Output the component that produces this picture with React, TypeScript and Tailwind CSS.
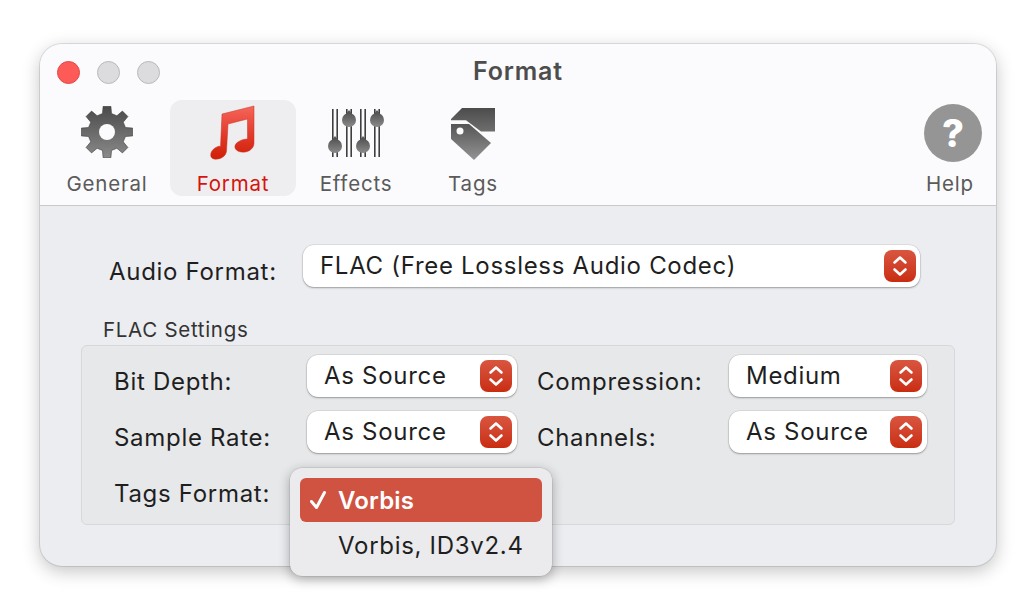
const font = { fontFamily: "Inter, 'Noto Sans', sans-serif" };

// gear outline: 8 teeth round a hole
function gearPath() {
  const pts: string[] = [];
  const teeth = 8;
  for (let i = 0; i < teeth; i++) {
    const a = (i * Math.PI * 2) / teeth - Math.PI / 2;
    const rows: [number, number][] = [
      [-0.24, 19],
      [-0.15, 26],
      [0.15, 26],
      [0.24, 19],
    ];
    for (const [da, r] of rows) {
      pts.push(`${(26 + r * Math.cos(a + da)).toFixed(2)} ${(26 + r * Math.sin(a + da)).toFixed(2)}`);
    }
  }
  return "M" + pts.join("L") + "Z";
}

function GearIcon() {
  return (
    <svg width="52" height="52" viewBox="0 0 52 52">
      <defs>
        <linearGradient id="gearFill" x1="0" y1="0" x2="0" y2="1">
          <stop offset="0" stopColor="#4a4a4a" />
          <stop offset="1" stopColor="#8a8a8a" />
        </linearGradient>
      </defs>
      <path d={gearPath()} fill="url(#gearFill)" stroke="#3e3e3e" strokeWidth="0.6" />
      <circle cx="26" cy="26" r="8" fill="#fbfbfd" />
    </svg>
  );
}

function NoteIcon() {
  return (
    <svg className="mt-[2px]" width="46" height="56" viewBox="0 0 46 56">
      <defs>
        <linearGradient id="noteFill" x1="0" y1="0" x2="0" y2="1">
          <stop offset="0" stopColor="#f5665a" />
          <stop offset="0.55" stopColor="#e2392a" />
          <stop offset="1" stopColor="#cf1f06" />
        </linearGradient>
      </defs>
      <path
        d="M12 9L44 1V38C44 44 38 48 31 47C24 46 23 40 28 37C31 35 34 34 37.500 34L37.500 14L18 19L16.500 46C16 52 9 55 4 54C-1 53 0 46 5 43C8 41 9.500 41 10.500 41.500Z"
        fill="url(#noteFill)"
        stroke="#c9301e"
        strokeWidth="0.5"
      />
    </svg>
  );
}

function SlidersIcon() {
  const sliders = [
    { x: 7, y: 37 },
    { x: 21, y: 11 },
    { x: 35, y: 37 },
    { x: 49, y: 11 },
  ];
  return (
    <svg className="mt-[1px]" width="56" height="48" viewBox="0 0 56 48">
      <defs>
        <linearGradient id="knobFill" x1="0" y1="0" x2="0" y2="1">
          <stop offset="0" stopColor="#555" />
          <stop offset="1" stopColor="#8a8a8a" />
        </linearGradient>
      </defs>
      {sliders.map((s) => (
        <g key={s.x}>
          <rect x={s.x - 3} y="0" width="1.600" height="48" fill="#3f3f3f" />
          <rect x={s.x + 1.400} y="0" width="1.600" height="48" fill="#3f3f3f" />
          <circle cx={s.x} cy={s.y} r="7" fill="url(#knobFill)" />
          <path d={`M${s.x - 3} ${s.y - 6}L${s.x} ${s.y - 10}L${s.x + 3} ${s.y - 6}Z`} fill="#555" />
        </g>
      ))}
    </svg>
  );
}

function TagsIcon() {
  return (
    <svg className="mt-[4px]" width="44" height="52" viewBox="0 0 44 52">
      <defs>
        <linearGradient id="tagBack" x1="0" y1="0" x2="0" y2="1">
          <stop offset="0" stopColor="#4c4c4c" />
          <stop offset="1" stopColor="#6e6e6e" />
        </linearGradient>
        <linearGradient id="tagFront" x1="0" y1="0" x2="0" y2="1">
          <stop offset="0" stopColor="#555" />
          <stop offset="1" stopColor="#949494" />
        </linearGradient>
      </defs>
      <path d="M11 0H44V23.500H30L15 12.300H0V11Z" fill="url(#tagBack)" />
      <path d="M0 16H18L40 35L23 52L0 31Z" fill="url(#tagFront)" />
      <circle cx="9" cy="23" r="3.500" fill="#fbfbfd" />
    </svg>
  );
}

function Stepper() {
  return (
    <div className="flex h-8 w-8 shrink-0 items-center justify-center rounded-lg bg-gradient-to-b from-[#d9553f] to-[#c92c10]">
      <svg width="18" height="24" viewBox="0 0 18 24" fill="none" stroke="#fff" strokeWidth="2.600" strokeLinecap="round" strokeLinejoin="round">
        <path d="M3.500 8.500L9 3.500L14.500 8.500" />
        <path d="M3.500 15.500L9 20.500L14.500 15.500" />
      </svg>
    </div>
  );
}

function Select({ value, width }: { value: string; width: string }) {
  return (
    <div className={`flex h-[42px] ${width} shrink-0 items-center justify-between rounded-[11px] bg-white pl-[17px] pr-[5px] text-[24px] tracking-[0.7px] text-[#1f1f1f] shadow-[0_0_0_0.5px_rgba(0,0,0,0.12),0_1px_2px_rgba(0,0,0,0.3)]`}>
      <span className="-mt-[1px]">{value}</span>
      <Stepper />
    </div>
  );
}

function ToolItem({ label, icon, active, className }: { label: string; icon: React.ReactNode; active?: boolean; className: string }) {
  return (
    <div className={`flex h-24 flex-col items-center rounded-xl ${active ? "bg-[#eeeef0] text-[#d5140c]" : "text-[#5a5a5a]"} ${className}`}>
      <div className="flex h-16 items-center">{icon}</div>
      <div className="mt-2 text-[20.500px] leading-[24px] tracking-[0.8px]">{label}</div>
    </div>
  );
}

function Row({ children }: { children: React.ReactNode }) {
  return <div className="flex h-[42px] items-center">{children}</div>;
}

function Label({ text, width }: { text: string; width: string }) {
  return <div className={`mt-3 ${width} shrink-0 text-[24px] tracking-[0.7px] text-[#1f1f1f]`}>{text}</div>;
}

export default function App() {
  return (
    <div className="h-[610px] w-[1036px] bg-white pl-10 pt-11" style={font}>
      <div className="flex h-[522px] w-[956px] flex-col rounded-[22px] bg-[#ecedf0] shadow-[0_0_0_1px_rgba(0,0,0,0.1),0_5px_18px_rgba(0,0,0,0.24)]">
        <div className="h-[162px] shrink-0 rounded-t-[22px] border-b border-[#c9c9cb] bg-[#fbfbfd]">
          <div className="flex h-14 items-center pl-[17px]">
            <div className="flex w-[299px] gap-[17px]">
              <div className="h-[23px] w-[23px] rounded-full border border-[#e04945] bg-[#fd5a58]" />
              <div className="h-[23px] w-[23px] rounded-full border border-[#b9b9bb] bg-[#dcdcde]" />
              <div className="h-[23px] w-[23px] rounded-full border border-[#b9b9bb] bg-[#dcdcde]" />
            </div>
            <div className="w-[324px] text-center text-[25px] font-semibold tracking-[0.8px] text-[#4d4d4d]">Format</div>
          </div>
          <div className="flex pl-1">
            <ToolItem label="General" icon={<GearIcon />} className="w-[126px]" />
            <ToolItem label="Format" icon={<NoteIcon />} active className="w-[126px]" />
            <ToolItem label="Effects" icon={<SlidersIcon />} className="w-[120px]" />
            <ToolItem label="Tags" icon={<TagsIcon />} className="w-[114px]" />
            <div className="ml-auto flex h-24 w-[92px] flex-col items-center text-[#5a5a5a]">
              <div className="ml-[6px] mt-1 flex h-[58px] w-[58px] items-center justify-center rounded-full bg-[#959595] text-[38px] font-extrabold text-white">?</div>
              <div className="mt-[10px] text-[20.500px] leading-[24px] tracking-[0.8px]">Help</div>
            </div>
          </div>
        </div>

        <div className="mt-[39px] flex h-[42px] items-center pl-[69px]">
          <Label text="Audio Format:" width="w-[168px] whitespace-nowrap" />
          <div className="ml-[26px] flex h-[42px] w-[617px] items-center justify-between rounded-[11px] bg-white pl-[17px] pr-[4px] text-[24px] tracking-[0.7px] text-[#1f1f1f] shadow-[0_0_0_0.5px_rgba(0,0,0,0.12),0_1px_2px_rgba(0,0,0,0.3)]">
            <span className="-mt-[1px]">FLAC (Free Lossless Audio Codec)</span>
            <Stepper />
          </div>
        </div>

        <div className="ml-[63px] mt-[31px] text-[20.500px] leading-[24px] tracking-[0.7px] text-[#333]">FLAC Settings</div>

        <div className="ml-[41px] mt-[3px] h-[180px] w-[874px] rounded-md border border-[#d8d8da] bg-[#e7e8ea] pl-[32px] pt-[9px]">
          <div className="flex flex-col gap-[14px]">
            <Row>
              <Label text="Bit Depth:" width="w-[193px]" />
              <Select value="As Source" width="w-[210px]" />
              <div className="ml-5"><Label text="Compression:" width="w-[192px]" /></div>
              <Select value="Medium" width="w-[198px]" />
            </Row>
            <Row>
              <Label text="Sample Rate:" width="w-[193px]" />
              <Select value="As Source" width="w-[210px]" />
              <div className="ml-5"><Label text="Channels:" width="w-[192px]" /></div>
              <Select value="As Source" width="w-[198px]" />
            </Row>
            <Row>
              <Label text="Tags Format:" width="w-[193px]" />
              <div className="relative h-[42px] w-[210px]">
                <div className="absolute -left-[17px] top-[1px] z-10 h-[108px] w-[262px] rounded-xl bg-[#ebebed] p-[10px] shadow-[0_0_0_0.5px_rgba(0,0,0,0.12),0_3px_12px_rgba(0,0,0,0.32)]">
                  <div className="flex h-11 items-center rounded-md bg-[#d05241] pl-[10px] text-[24px] font-semibold tracking-[0.2px] text-white">
                    <svg className="w-[28px] shrink-0" width="28" height="22" viewBox="0 0 28 22" fill="none" stroke="#fff" strokeWidth="3" strokeLinecap="round" strokeLinejoin="round">
                      <path d="M1.500 12.500L6.500 18.500L14.500 3.500" />
                    </svg>
                    <span className="mt-[2px]">Vorbis</span>
                  </div>
                  <div className="mt-[2px] pl-[38px] text-[24px] leading-[44px] tracking-[0.7px] text-[#1f1f1f]">Vorbis, ID3v2.4</div>
                </div>
              </div>
            </Row>
          </div>
        </div>
      </div>
    </div>
  );
}
